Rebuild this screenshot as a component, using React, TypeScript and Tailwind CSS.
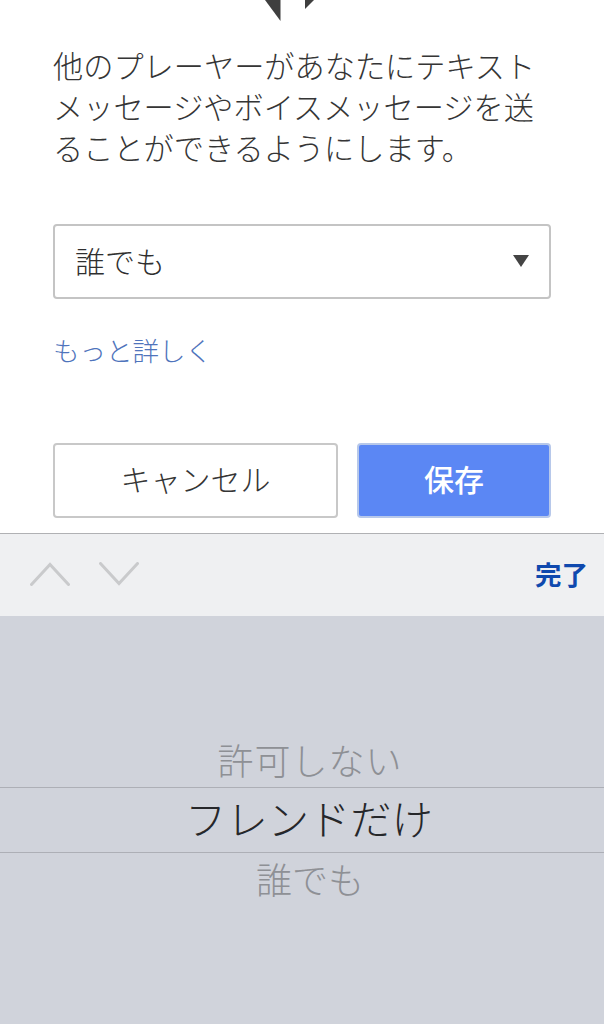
const jp = "font-['Noto_Sans_CJK_JP','Noto_Sans',sans-serif]";

export default function App() {
  return (
    <div className={`${jp} flex h-[1024px] w-[604px] flex-col overflow-hidden bg-white`}>
      <svg className="block h-[22px] w-[604px] shrink-0" viewBox="0 0 604 22">
        <polygon points="265,0 280.5,0 280.5,21" fill="#3f3f3f" />
        <polygon points="305,0 314,0 305,9" fill="#3f3f3f" />
      </svg>
      <div className="flex h-[511px] shrink-0 flex-col px-[53px]">
        <p className="mt-[23px] -mr-[4px] text-[30.2px] leading-[41px] font-light text-[#353535]">
          他のプレーヤーがあなたにテキストメッセージやボイスメッセージを送ることができるようにします。
        </p>
        <div className="mt-[56px] flex h-[75px] items-center justify-between rounded-[4px] border-2 border-[#c4c4c4] pr-[20px] pb-[2px] pl-[20px]">
          <span className="text-[30px] font-light text-[#2f2f2f]">誰でも</span>
          <svg className="h-[12px] w-[16px]" viewBox="0 0 16 12">
            <polygon points="0,0 16,0 8,12" fill="#444444" />
          </svg>
        </div>
        <a className="mt-[31px] text-[26.5px] leading-[40px] font-light text-[#4f74bc]">もっと詳しく</a>
        <div className="mt-[73px] flex gap-[19px]">
          <button className="h-[75px] w-[285px] rounded-[4px] border-2 border-[#c8c8c8] bg-white pb-[4px] text-[30px] font-light text-[#353535]">
            キャンセル
          </button>
          <button className="h-[75px] w-[194px] rounded-[4px] border-2 border-[#b7c8ea] bg-[#5b87f4] pb-[4px] text-[30px] font-medium text-white">
            保存
          </button>
        </div>
      </div>
      <div className="flex h-[83px] shrink-0 items-center justify-between border-t border-[#b0b1b4] bg-[#eff0f2] pr-[16px] pb-[2px] pl-[30px]">
        <div className="flex gap-[29px]">
          <svg className="h-[24px] w-[40px]" viewBox="0 0 40 24" fill="none" stroke="#c9cacc" strokeWidth="3" strokeLinecap="round">
            <path d="M1.5 22.5 20 2.5 38.5 22.5" />
          </svg>
          <svg className="h-[24px] w-[40px]" viewBox="0 0 40 24" fill="none" stroke="#c9cacc" strokeWidth="3" strokeLinecap="round">
            <path d="M1.5 1.5 20 21.5 38.5 1.5" />
          </svg>
        </div>
        <span className="text-[26.5px] font-bold text-[#0f49ae]">完了</span>
      </div>
      <div className="flex flex-1 flex-col items-center bg-[#d0d3db] pt-[118px]">
        <div className="flex h-[53px] items-center pb-[3px] pl-[16px] text-[36px] font-light tracking-[1px] text-[#8e9095]">許可しない</div>
        <div className="flex h-[66px] w-full items-center justify-center border-y border-[#adafb6] pb-[4px] pl-[14px] text-[41.3px] font-light text-[#26272a]">
          フレンドだけ
        </div>
        <div className="flex h-[54px] items-center pb-[5px] pl-[16px] text-[36px] font-light text-[#8e9095]">誰でも</div>
      </div>
    </div>
  );
}
